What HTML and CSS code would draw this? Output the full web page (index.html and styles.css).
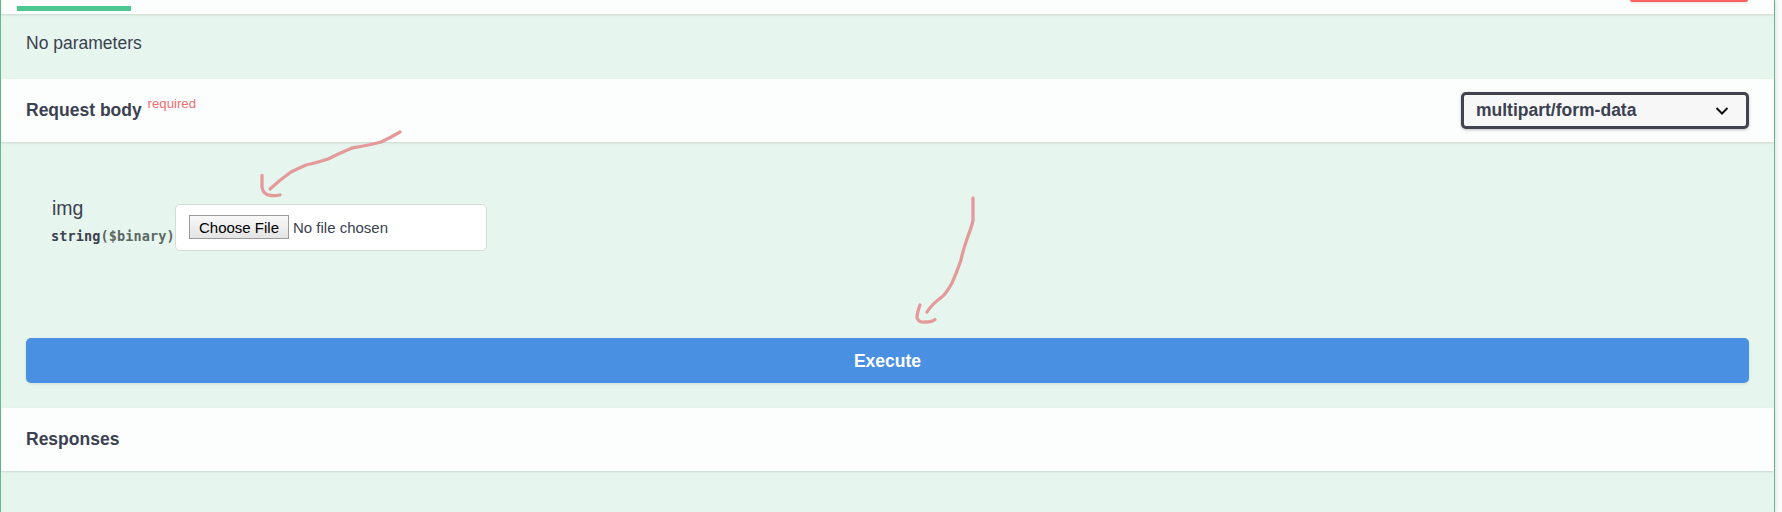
FILE: index.html
```html
<!DOCTYPE html>
<html lang="en">
<head>
<meta charset="utf-8">
<title>API operation</title>
<link rel="stylesheet" href="styles.css">
</head>
<body>
<main class="opblock">
  <header class="section-header tabs"><span class="tab-line"></span><span class="cancel-button"></span></header>
  <section class="parameters"><p>No parameters</p></section>
  <header class="section-header">
    <h4>Request body <sup>required</sup></h4>
    <div class="select"><span>multipart/form-data</span>
      <svg class="chevron" viewBox="0 0 14 10"><path d="M1.5 2 7 7.5 12.5 2"/></svg>
    </div>
  </header>
  <section class="body">
    <div class="field">
      <div class="field-info">
        <div class="name">img</div>
        <div class="type">string<span>($binary)</span></div>
      </div>
      <div class="file"><button class="choose">Choose File</button><span class="status">No file chosen</span></div>
    </div>
    <button class="execute">Execute</button>
  </section>
  <header class="section-header"><h4>Responses</h4></header>
</main>
<svg class="arrows" viewBox="0 0 1782 512">
  <path d="M400 132 Q390 138 381 142 Q370 145 352 148 Q340 153 328 159 Q316 163 306 165 Q297 169 291 172 Q281 179 270 189"/>
  <path d="M262 175.500 L262 187 Q263 195 271 195.500 Q276 196 280 195"/>
  <path d="M973 198 L973 220 Q972 226 968 236 Q963 250 961 260 Q956 274 952 283 Q947 292 943 296 Q931 305 927 312"/>
  <path d="M920 305 Q917 313 917 318 Q919 323 926 322 Q932 322 935 319.500"/>
</svg>
</body>
</html>
```
FILE: styles.css
```css
* { box-sizing: border-box; }
body {
  margin: 0;
  height: 512px;
  overflow: hidden;
  background: #fafafa;
  color: #3b4151;
  font-family: "Liberation Sans", Arial, sans-serif;
  font-size: 17.5px;
}
.opblock {
  width: 1775px;
  height: 512px;
  border: solid #5fbd91;
  border-width: 0 1px;
  background: #e6f5ed;
  box-shadow: 0 0 4px rgba(0, 0, 0, .15);
}
.section-header {
  display: flex;
  align-items: center;
  justify-content: space-between;
  height: 63px;
  padding: 0 25px;
  background: #fcfefd;
  box-shadow: 0 1px 2px rgba(0, 0, 0, .12);
}
.tabs { height: 14px; align-items: flex-start; padding: 0 26px 0 16px; }
.tab-line { width: 114px; height: 5px; margin-top: 6px; background: #4dc790; }
.cancel-button {
  width: 118px;
  height: 2px;
  background: #ff6060;
  border-radius: 0 0 4px 4px;
  box-shadow: 0 1px 2px rgba(0, 0, 0, .1);
}
.parameters { height: 65px; padding: 19px 25px; }
.parameters p { margin: 0; line-height: 20px; }
h4 { margin: 0; padding-bottom: 2px; font-size: 17.5px; line-height: 20px; }
sup {
  margin-left: 1px;
  color: #f06c70;
  font-size: 13.2px;
  font-weight: 400;
  line-height: 0;
  vertical-align: 8px;
}
.select {
  display: flex;
  align-items: center;
  justify-content: space-between;
  width: 288px;
  height: 37px;
  padding: 0 17px 0 12px;
  border: 3px solid #41444e;
  border-radius: 5px;
  background: #f7f7f7;
  box-shadow: 0 1px 3px rgba(0, 0, 0, .25);
  font-weight: 700;
}
.chevron { width: 14px; height: 10px; fill: none; stroke: #111; stroke-width: 2; }
.body { height: 266px; padding: 62px 25px 25px; }
.field { display: flex; height: 134px; padding-left: 25px; }
.field-info { width: 124px; flex: none; }
.name { margin: -7px 0 0 1px; font-size: 19.5px; line-height: 22px; }
.type {
  margin-top: 8px;
  font: 700 13.5px/18px "DejaVu Sans Mono", monospace;
  letter-spacing: .12px;
  white-space: nowrap;
}
.type span { color: #5c6763; }
.file {
  display: flex;
  align-items: center;
  width: 312px;
  height: 47px;
  padding: 0 13px;
  border: 1px solid #d5dcd8;
  border-radius: 5px;
  background: #fff;
  font-size: 15px;
}
.choose {
  width: 100px;
  height: 24px;
  margin-bottom: 1px;
  padding: 0;
  border: 1px solid #9b9b9b;
  background: linear-gradient(#f8f8f8, #e4e4e4);
  color: #000;
  font: 15px "Liberation Sans", Arial, sans-serif;
}
.status { margin-left: 4px; }
.execute {
  display: block;
  width: 100%;
  height: 45px;
  padding: 2px 0 0;
  border: 0;
  border-radius: 5px;
  background: #4990e2;
  box-shadow: 0 1px 3px rgba(0, 0, 0, .1);
  color: #fff;
  font: 700 17.5px "Liberation Sans", Arial, sans-serif;
}
.arrows {
  position: absolute;
  left: 0;
  top: 0;
  width: 1782px;
  height: 512px;
  fill: none;
  stroke: #e49a9b;
  stroke-width: 3.3;
  stroke-linecap: round;
  stroke-linejoin: round;
  pointer-events: none;
}
```
